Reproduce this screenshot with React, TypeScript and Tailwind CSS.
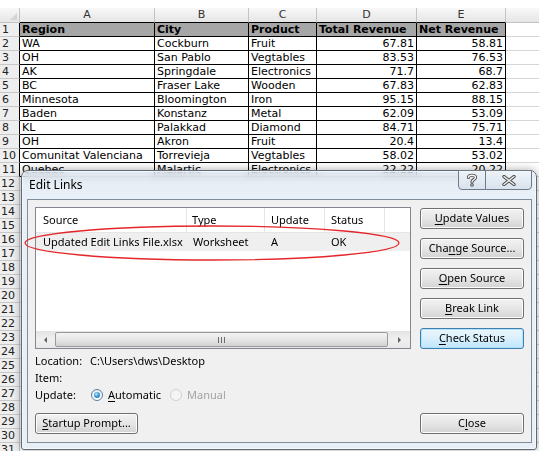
import React from "react";

const data: string[][] = [
  ["Region", "City", "Product", "Total Revenue", "Net Revenue"],
  ["WA", "Cockburn", "Fruit", "67.81", "58.81"],
  ["OH", "San Pablo", "Vegtables", "83.53", "76.53"],
  ["AK", "Springdale", "Electronics", "71.7", "68.7"],
  ["BC", "Fraser Lake", "Wooden", "67.83", "62.83"],
  ["Minnesota", "Bloomington", "Iron", "95.15", "88.15"],
  ["Baden", "Konstanz", "Metal", "62.09", "53.09"],
  ["KL", "Palakkad", "Diamond", "84.71", "75.71"],
  ["OH", "Akron", "Fruit", "20.4", "13.4"],
  ["Comunitat Valenciana", "Torrevieja", "Vegtables", "58.02", "53.02"],
  ["Quebec", "Malartic", "Electronics", "22.22", "20.22"],
];

const colW = ["w-[135px]", "w-[94px]", "w-[68px]", "w-[100px]", "w-[89px]"];
const letters = ["A", "B", "C", "D", "E"];

function WinButton({
  children,
  className = "",
  focused = false,
}: {
  children: React.ReactNode;
  className?: string;
  focused?: boolean;
}) {
  return (
    <div
      className={
        "h-[21px] rounded-[3px] border flex items-center justify-center text-[11px] text-black " +
        (focused
          ? "border-[#3c7fb1] bg-gradient-to-b from-[#eaf6fd] via-[#d9f0fc] to-[#bee6fd] shadow-[inset_0_0_0_1px_#b5e2f9] "
          : "border-[#707070] bg-gradient-to-b from-[#f2f2f2] via-[#e6e6e6] to-[#d3d3d3] shadow-[inset_0_0_0_1px_#fcfcfc] ") +
        className
      }
    >
      {children}
    </div>
  );
}

function U({ children }: { children: React.ReactNode }) {
  return <span className="underline underline-offset-[2px]">{children}</span>;
}

export default function App() {
  const emptyRows = Array.from({ length: 20 }, (_, i) => i + 12);
  return (
    <div className="relative w-[539px] h-[451px] overflow-hidden bg-white font-['DejaVu_Sans',sans-serif]">
      {/* Spreadsheet */}
      <div className="h-[8px] bg-white" />
      <div className="flex h-[15px] bg-gradient-to-b from-[#f8f8f8] to-[#e4e4e4] text-[11px] text-[#333]">
        <div className="w-[20px] relative border-r border-b border-[#c3c3c3]">
          <div className="absolute right-[2px] bottom-[2px] w-0 h-0 border-l-[7px] border-l-transparent border-b-[7px] border-b-[#d4d4d4]" />
        </div>
        {letters.map((l, i) => (
          <div
            key={l}
            className={colW[i] + " border-r border-[#c3c3c3] border-b border-b-black flex items-center justify-center leading-[14px]"}
          >
            {l}
          </div>
        ))}
        <div className="flex-1 border-b border-[#c3c3c3]" />
      </div>
      {data.map((row, r) => (
        <div key={r} className="flex h-[14px] text-[11px] leading-[13px] text-black">
          <div className="w-[20px] bg-[#eeeeee] border-r border-r-black border-b border-b-[#c8c8c8] text-[#222] pl-[2px] flex items-center">
            {r + 1}
          </div>
          {row.map((c, i) => (
            <div
              key={i}
              className={
                colW[i] +
                " border-r border-b border-black flex items-center whitespace-nowrap overflow-hidden " +
                (r === 0 ? "bg-[#a6a6a6] font-bold pl-[2px] " : i >= 3 ? "justify-end pr-[2px] " : "pl-[2px] ")
              }
            >
              {c}
            </div>
          ))}
          <div className="flex-1 border-b border-[#d6d6d6]" />
        </div>
      ))}
      {emptyRows.map((n) => (
        <div key={n} className="flex h-[14px] text-[11px] leading-[13px]">
          <div className="w-[20px] bg-[#eeeeee] border-r border-[#c3c3c3] border-b border-b-[#c8c8c8] text-[#222] pl-[1px] flex items-center">
            {n}
          </div>
          <div className="flex-1 border-b border-[#d6d6d6]" />
        </div>
      ))}

      {/* Dialog */}
      <div className="absolute left-[21px] top-[170px] w-[516px] h-[280px] rounded-t-[7px] rounded-b-[3px] border border-[#5e6a78] bg-[#dbe6f3]/60 backdrop-blur-[4px] shadow-[0_0_8px_rgba(0,0,0,0.35),inset_0_0_0_1px_rgba(255,255,255,0.6)] font-['Noto_Sans',sans-serif]">
        <div className="h-[28px] flex items-center pl-[7px] text-[12px] text-black">Edit Links</div>
        {/* caption buttons */}
        <div className="absolute left-[436px] top-[-1px] w-[28px] h-[20px] rounded-bl-[4px] border border-[#6e7a88] bg-gradient-to-b from-[#f1f5fa]/90 to-[#d4dfeb]/80 flex items-center justify-center">
          <svg width="12" height="14" viewBox="0 0 12 14">
            <path
              d="M2.5 4.5 C2.5 1.5 9.5 1.5 9.5 4.5 C9.5 6.5 6 6.5 6 9"
              fill="none"
              stroke="#4a4a4a"
              strokeWidth="3.2"
              strokeLinecap="round"
            />
            <path
              d="M2.5 4.5 C2.5 1.5 9.5 1.5 9.5 4.5 C9.5 6.5 6 6.5 6 9"
              fill="none"
              stroke="#f4f4f4"
              strokeWidth="1.4"
              strokeLinecap="round"
            />
            <circle cx="6" cy="12" r="1.8" fill="#4a4a4a" />
            <circle cx="6" cy="12" r="0.8" fill="#f4f4f4" />
          </svg>
        </div>
        <div className="absolute left-[463px] top-[-1px] w-[47px] h-[20px] rounded-br-[4px] border border-[#6e7a88] bg-gradient-to-b from-[#f1f5fa]/90 to-[#d4dfeb]/80 flex items-center justify-center">
          <svg width="14" height="11" viewBox="0 0 14 11">
            <path d="M2 1.5 L12 9.5 M12 1.5 L2 9.5" stroke="#4a4a4a" strokeWidth="3.4" strokeLinecap="round" />
            <path d="M2 1.5 L12 9.5 M12 1.5 L2 9.5" stroke="#f2f2f2" strokeWidth="1.4" strokeLinecap="round" />
          </svg>
        </div>

        {/* content */}
        <div className="ml-[5px] w-[505px] h-[244px] border border-[#7f8c99] bg-[#f0f0f0] flex flex-col px-[7px] pt-[7px] text-[11px] text-black">
          <div className="flex">
            {/* list box */}
            <div className="w-[377px] h-[142px] border border-[#828790] bg-white flex flex-col">
              <div className="flex h-[25px] border-b border-[#e5e5e5]">
                <div className="w-[151px] pl-[7px] border-r border-[#e5e5e5] flex items-center">Source</div>
                <div className="w-[78px] pl-[5px] border-r border-[#e5e5e5] flex items-center">Type</div>
                <div className="w-[60px] pl-[6px] border-r border-[#e5e5e5] flex items-center">Update</div>
                <div className="w-[60px] pl-[6px] border-r border-[#e5e5e5] flex items-center">Status</div>
              </div>
              <div className="flex h-[18px] bg-[#efefef] items-center">
                <div className="w-[151px] pl-[7px] whitespace-nowrap">Updated Edit Links File.xlsx</div>
                <div className="w-[78px] pl-[6px]">Worksheet</div>
                <div className="w-[60px] pl-[6px]">A</div>
                <div className="w-[60px] pl-[6px]">OK</div>
              </div>
              <div className="flex-1" />
              <div className="h-[17px] flex items-center bg-gradient-to-b from-[#e3e3e3] via-[#f0f0f0] to-[#e8e8e8]">
                <div className="w-[18px] h-full flex items-center justify-center">
                  <div className="w-0 h-0 border-y-[3.5px] border-y-transparent border-r-[3.5px] border-r-[#606060]" />
                </div>
                <div className="w-[333px] h-[15px] ml-[1px] rounded-[2px] border border-[#9a9a9a] bg-gradient-to-b from-[#f3f3f3] via-[#e6e6e6] to-[#d2d2d2] flex items-center justify-center">
                  <div className="flex gap-[2px]">
                    <div className="w-[1px] h-[6px] bg-[#6b6b6b]" />
                    <div className="w-[1px] h-[6px] bg-[#6b6b6b]" />
                    <div className="w-[1px] h-[6px] bg-[#6b6b6b]" />
                  </div>
                </div>
                <div className="flex-1 h-full flex items-center justify-center">
                  <div className="w-0 h-0 border-y-[3.5px] border-y-transparent border-l-[3.5px] border-l-[#606060]" />
                </div>
              </div>
            </div>
            {/* right buttons */}
            <div className="ml-[9px] mt-[1px] flex flex-col gap-[9px]">
              <WinButton className="w-[104px]">
                <U>U</U>pdate Values
              </WinButton>
              <WinButton className="w-[104px]">
                Cha<U>n</U>ge Source...
              </WinButton>
              <WinButton className="w-[104px]">
                <U>O</U>pen Source
              </WinButton>
              <WinButton className="w-[104px]">
                <U>B</U>reak Link
              </WinButton>
              <WinButton className="w-[104px]" focused>
                <U>C</U>heck Status
              </WinButton>
            </div>
          </div>
          {/* details */}
          <div className="mt-[3px] flex flex-col leading-[17px]">
            <div className="flex">
              <div className="w-[55px]">Location:</div>
              <div>C:\Users\dws\Desktop</div>
            </div>
            <div className="flex">
              <div className="w-[55px]">Item:</div>
            </div>
            <div className="flex items-center">
              <div className="w-[56px]">Update:</div>
              <div className="w-[12px] h-[12px] rounded-full border border-[#5a7ea0] bg-gradient-to-b from-[#e6ecf2] to-[#ffffff] flex items-center justify-center">
                <div className="w-[6px] h-[6px] rounded-full bg-[radial-gradient(circle_at_40%_35%,#b9e6ff,#2f8ed0_55%,#1b5a8c)]" />
              </div>
              <div className="ml-[5px]">
                <U>A</U>utomatic
              </div>
              <div className="ml-[9px] w-[12px] h-[12px] rounded-full border border-[#cfcfcf] bg-[#f4f4f4]" />
              <div className="ml-[5px] text-[#a3a3a3]">Manual</div>
            </div>
          </div>
          <div className="mt-auto mb-[8px] flex justify-between">
            <WinButton className="w-[103px]">
              <U>S</U>tartup Prompt...
            </WinButton>
            <WinButton className="w-[104px]">
              C<U>l</U>ose
            </WinButton>
          </div>
        </div>
      </div>

      {/* red ellipse annotation */}
      <svg className="absolute left-0 top-0 pointer-events-none" width="539" height="451">
        <ellipse cx="212" cy="243" rx="187" ry="17" fill="none" stroke="#e3262b" strokeWidth="1.3" />
      </svg>
    </div>
  );
}
